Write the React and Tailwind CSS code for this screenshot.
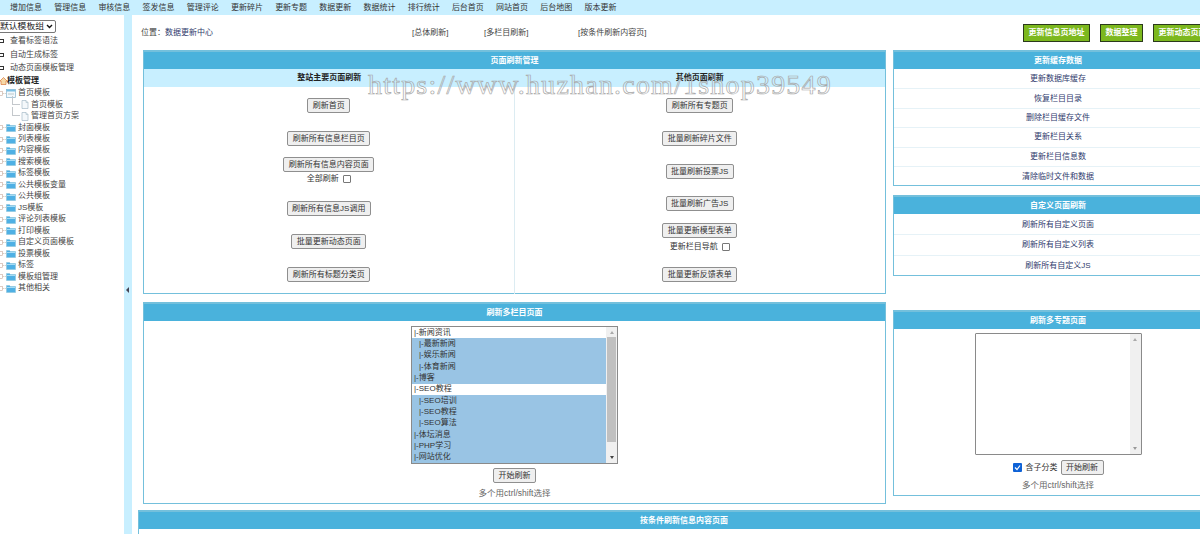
import { Fragment } from "react";

const menu = ["增加信息", "管理信息", "审核信息", "签发信息", "管理评论", "更新碎片", "更新专题", "数据更新", "数据统计", "排行统计", "后台首页", "网站首页", "后台地图", "版本更新"];
const folders = ["封面模板", "列表模板", "内容模板", "搜索模板", "标签模板", "公共模板变量", "公共模板", "JS模板", "评论列表模板", "打印模板", "自定义页面模板", "投票模板", "标签", "模板组管理", "其他相关"];
const leftButtons = [
  { text: "刷新首页", cls: "mt-[11px]" },
  { text: "刷新所有信息栏目页", cls: "mt-[18px]" },
  { text: "刷新所有信息内容页面", cls: "mt-[11px]", check: "全部刷新", checkCls: "mt-[1px]" },
  { text: "刷新所有信息JS调用", cls: "mt-[16px]" },
  { text: "批量更新动态页面", cls: "mt-[18px]" },
  { text: "刷新所有标题分类页", cls: "mt-[18px]" },
];
const rightButtons = [
  { text: "刷新所有专题页", cls: "mt-[11px]" },
  { text: "批量刷新碎片文件", cls: "mt-[18px]" },
  { text: "批量刷新投票JS", cls: "mt-[18px]" },
  { text: "批量刷新广告JS", cls: "mt-[17px]" },
  { text: "批量更新模型表单", cls: "mt-[12px]", check: "更新栏目导航", checkCls: "mt-[3px]" },
  { text: "批量更新反馈表单", cls: "mt-[14px]" },
];
const listItems = [
  { text: "|-新闻资讯" },
  { text: "|-最新新闻", sel: true, sub: true },
  { text: "|-娱乐新闻", sel: true, sub: true },
  { text: "|-体育新闻", sel: true, sub: true },
  { text: "|-博客", sel: true },
  { text: "|-SEO教程" },
  { text: "|-SEO培训", sel: true, sub: true },
  { text: "|-SEO教程", sel: true, sub: true },
  { text: "|-SEO算法", sel: true, sub: true },
  { text: "|-体坛消息", sel: true },
  { text: "|-PHP学习", sel: true },
  { text: "|-网站优化", sel: true },
];

function FolderIcon() {
  return (
    <svg width="10" height="9" viewBox="0 0 10 9" className="shrink-0">
      <path d="M0.5 1.5 H3.5 L4.5 2.5 H9.5 V8.5 H0.5 Z" fill="#4fb0e4" stroke="#8cc4dc" strokeWidth="0.6" />
      <rect x="1" y="3" width="8" height="1" fill="#a5dcf5" />
    </svg>
  );
}

function PageIcon() {
  return (
    <svg width="8" height="9" viewBox="0 0 8 9" className="shrink-0">
      <path d="M1 0.5 H5 L7 2.5 V8.5 H1 Z" fill="#f4f8fb" stroke="#a8bcc8" strokeWidth="0.7" />
      <path d="M5 0.5 V2.5 H7" fill="none" stroke="#a8bcc8" strokeWidth="0.6" />
    </svg>
  );
}

function Expander() {
  return (
    <svg width="6" height="7" viewBox="0 0 6 7" className="shrink-0">
      <path d="M0 3.5 H6" stroke="#b9b0a0" strokeWidth="0.7" strokeDasharray="1 0.6" />
      <rect x="-1.5" y="1.5" width="4" height="4" fill="#fff" stroke="#c9a89a" strokeWidth="0.6" />
    </svg>
  );
}

function Sidebar() {
  return (
    <div className="w-[124px] shrink-0 overflow-hidden text-[8px] leading-none text-[#444]">
      <div className="relative ml-[-2px] mt-[5px] h-[13px] w-[58px]">
        <select className="block h-full w-full appearance-none rounded-[2px] border border-[#777] bg-white pl-[1px] text-[8.8px] leading-none text-[#222]">
          <option>默认模板组</option>
        </select>
        <svg width="7" height="5" viewBox="0 0 7 5" className="pointer-events-none absolute right-[3px] top-[4px]">
          <path d="M1 1 L3.5 3.5 L6 1" fill="none" stroke="#111" strokeWidth="1.4" />
        </svg>
      </div>
      <div className="mt-[1px]">
        {["查看标签语法", "自动生成标签", "动态页面模板管理"].map((t) => (
          <div key={t} className="flex h-[13.8px] items-center">
            <span className="ml-[-1px] h-[4px] w-[5px] border border-[#333]" />
            <span className="ml-[6px]">{t}</span>
          </div>
        ))}
      </div>
      <div className="flex h-[12px] items-center font-bold text-[#222]">
        <svg width="7" height="8" viewBox="0 0 7 8" className="shrink-0">
          <path d="M3.5 0.5 L7 4 H6 V7.5 H1 V4 H0 Z" fill="#f6d9a8" stroke="#d9783c" strokeWidth="0.7" />
        </svg>
        <span>模板管理</span>
      </div>
      <div className="flex h-[11.47px] items-center">
        <Expander />
        <svg width="10" height="9" viewBox="0 0 10 9" className="shrink-0">
          <rect x="0.5" y="0.5" width="9" height="8" fill="#f2f8fc" stroke="#8ab4cc" strokeWidth="0.7" />
          <rect x="0.5" y="0.5" width="9" height="2" fill="#7cc0e4" />
          <path d="M2 5 H8" stroke="#9aa" strokeWidth="0.6" />
        </svg>
        <span className="ml-[2px]">首页模板</span>
      </div>
      {["首页模板", "管理首页方案"].map((t, i) => (
        <div key={i} className="relative flex h-[11.47px] items-center pl-[21px]">
          <span className="absolute left-[12px] top-[-3px] h-[9px] w-[8px] border-b border-l border-[#c4c8cc]" />
          <PageIcon />
          <span className="ml-[2px]">{t}</span>
        </div>
      ))}
      {folders.map((t) => (
        <div key={t} className="flex h-[11.47px] items-center">
          <Expander />
          <FolderIcon />
          <span className="ml-[2px]">{t}</span>
        </div>
      ))}
    </div>
  );
}

function Splitter() {
  return (
    <div className="flex w-[8px] shrink-0 items-center bg-[#c8efff]">
      <span className="ml-[2px] mt-[30px] h-0 w-0 border-y-[3px] border-r-[3px] border-y-transparent border-r-[#445]" />
    </div>
  );
}

function Btn({ children }) {
  return (
    <button className="h-[15px] whitespace-nowrap rounded-[2px] border border-[#8f8f8f] bg-[#efefef] px-[4.5px] text-[8px] leading-none text-[#333]">
      {children}
    </button>
  );
}

function Panel({ title, className, children }) {
  return (
    <div className={"border border-t-2 border-[#74c0dc] " + className}>
      <div className="flex h-[17px] items-center justify-center bg-[#4ab2dc] text-[8px] font-bold text-white">{title}</div>
      {children}
    </div>
  );
}

function RefreshCol({ items }) {
  return (
    <div className="flex flex-col items-center">
      {items.map((b) => (
        <Fragment key={b.text}>
          <div className={"flex " + b.cls}>
            <Btn>{b.text}</Btn>
          </div>
          {b.check && (
            <div className={"flex h-[12px] items-center text-[8px] text-[#333] " + b.checkCls}>
              {b.check}
              <span className="ml-[4px] h-[8px] w-[8px] rounded-[1px] border border-[#777] bg-white" />
            </div>
          )}
        </Fragment>
      ))}
    </div>
  );
}

function LinkRows({ items, rowClass }) {
  return (
    <div className="pt-[1px]">
      {items.map((t, i) => (
        <div key={t} className={rowClass + " flex items-center justify-center text-[8px] text-[#2f3b6c] " + (i < items.length - 1 ? "border-b border-[#e6f2f7]" : "")}>
          {t}
        </div>
      ))}
    </div>
  );
}

function ListBox() {
  return (
    <div className="relative mx-auto mt-[5px] h-[138px] w-[207px] overflow-hidden border border-[#8a8a8a] bg-white text-[8px] leading-none text-[#333]">
      {listItems.map((o, i) => (
        <div key={i} className={"flex h-[11.35px] items-center " + (o.sel ? "bg-[#99c4e4] " : "") + (o.sub ? "pl-[7px]" : "pl-[2px]")}>
          {o.text}
        </div>
      ))}
      <div className="absolute bottom-0 right-0 top-0 flex w-[11px] flex-col items-center bg-[#f0f0f0]">
        <span className="mt-[4px] h-0 w-0 border-x-[2px] border-b-[3px] border-x-transparent border-b-[#aaa]" />
        <span className="mt-[3px] h-[105px] w-[9px] bg-[#c0c0c0]" />
        <span className="mt-[14px] h-0 w-0 border-x-[2px] border-t-[3px] border-x-transparent border-t-[#444]" />
      </div>
    </div>
  );
}

function TextBox() {
  return (
    <div className="relative mx-auto mt-[4px] h-[122px] w-[167px] rounded-[1px] border border-[#8a8a8a] bg-white">
      <div className="absolute bottom-0 right-0 top-0 flex w-[11px] flex-col items-center justify-between bg-[#f0f0f0] py-[4px]">
        <span className="h-0 w-0 border-x-[2px] border-b-[3px] border-x-transparent border-b-[#aaa]" />
        <span className="h-0 w-0 border-x-[2px] border-t-[3px] border-x-transparent border-t-[#999]" />
      </div>
    </div>
  );
}

export default function App() {
  return (
    <div className="relative h-[534px] w-[1200px] overflow-hidden bg-white [font-family:'Liberation_Sans','Noto_Sans_CJK_SC',sans-serif]">
      <div className="flex h-[15px] items-center gap-[12.2px] bg-[#c8efff] pl-[10px] text-[8px] text-[#333]">
        {menu.map((m) => (
          <span key={m}>{m}</span>
        ))}
      </div>
      <div className="flex h-[519px]">
        <Sidebar />
        <Splitter />
        <div className="min-w-0 flex-1">
          <div className="flex h-[35px] items-center text-[8px] text-[#444]">
            <span className="ml-[9px] w-[271px] shrink-0 pt-[1px]">
              位置：<span className="text-[#2f3b6c]">数据更新中心</span>
            </span>
            <span className="w-[72px] shrink-0">[总体刷新]</span>
            <span className="w-[94px] shrink-0">[多栏目刷新]</span>
            <span className="w-[445px] shrink-0">[按条件刷新内容页]</span>
            <div className="flex shrink-0 gap-[10px] font-bold text-white">
              {["更新信息页地址", "数据整理", "更新动态页面"].map((t) => (
                <span key={t} className="flex h-[18px] items-center whitespace-nowrap border border-[#2b3a1c] bg-[#7cb81e] px-[4.5px]">
                  {t}
                </span>
              ))}
            </div>
          </div>
          <div className="flex items-start gap-[7px] pl-[11px]">
            <div className="w-[743px] shrink-0">
              <Panel title="页面刷新管理" className="h-[244px]">
                <div className="grid h-[18px] grid-cols-2 bg-[#c8efff] text-center text-[8px] font-bold leading-[18px] text-[#222]">
                  <span>整站主要页面刷新</span>
                  <span>其他页面刷新</span>
                </div>
                <div className="grid h-[207px] grid-cols-2">
                  <div className="border-r border-[#dcecf2]">
                    <RefreshCol items={leftButtons} />
                  </div>
                  <RefreshCol items={rightButtons} />
                </div>
              </Panel>
              <Panel title="刷新多栏目页面" className="mt-[8px] h-[202px]">
                <ListBox />
                <div className="mt-[4px] flex justify-center">
                  <Btn>开始刷新</Btn>
                </div>
                <div className="mt-[4px] text-center text-[8.5px] text-[#666]">多个用ctrl/shift选择</div>
              </Panel>
            </div>
            <div className="w-[330px] shrink-0">
              <Panel title="更新缓存数据" className="h-[136px]">
                <LinkRows rowClass="h-[19.4px]" items={["更新数据库缓存", "恢复栏目目录", "删除栏目缓存文件", "更新栏目关系", "更新栏目信息数", "清除临时文件和数据"]} />
              </Panel>
              <Panel title="自定义页面刷新" className="mt-[9px] h-[81px]">
                <LinkRows rowClass="h-[20.4px]" items={["刷新所有自定义页面", "刷新所有自定义列表", "刷新所有自定义JS"]} />
              </Panel>
              <Panel title="刷新多专题页面" className="mt-[34px] h-[186px]">
                <TextBox />
                <div className="mt-[5px] flex items-center justify-center text-[8px] text-[#333]">
                  <span className="flex h-[9px] w-[9px] items-center justify-center rounded-[1px] bg-[#0f62d6]">
                    <svg width="7" height="7" viewBox="0 0 7 7">
                      <path d="M1 3.5 L3 5.5 L6 1.5" fill="none" stroke="#fff" strokeWidth="1.2" />
                    </svg>
                  </span>
                  <span className="ml-[4px] mr-[3px]">含子分类</span>
                  <Btn>开始刷新</Btn>
                </div>
                <div className="mt-[4px] text-center text-[8.5px] text-[#666]">多个用ctrl/shift选择</div>
              </Panel>
            </div>
          </div>
          <div className="ml-[6px] mt-[6px] w-[1092px]">
            <Panel title="按条件刷新信息内容页面" className="h-[60px]" />
          </div>
        </div>
      </div>
      <div className="pointer-events-none absolute left-[368px] top-[68px] whitespace-nowrap text-[28px] leading-[34px] tracking-[1.2px] text-transparent [-webkit-text-stroke:0.7px_#a8a8a8] [font-family:'Liberation_Serif',serif]">
        https://www.huzhan.com/1shop39549
      </div>
    </div>
  );
}
